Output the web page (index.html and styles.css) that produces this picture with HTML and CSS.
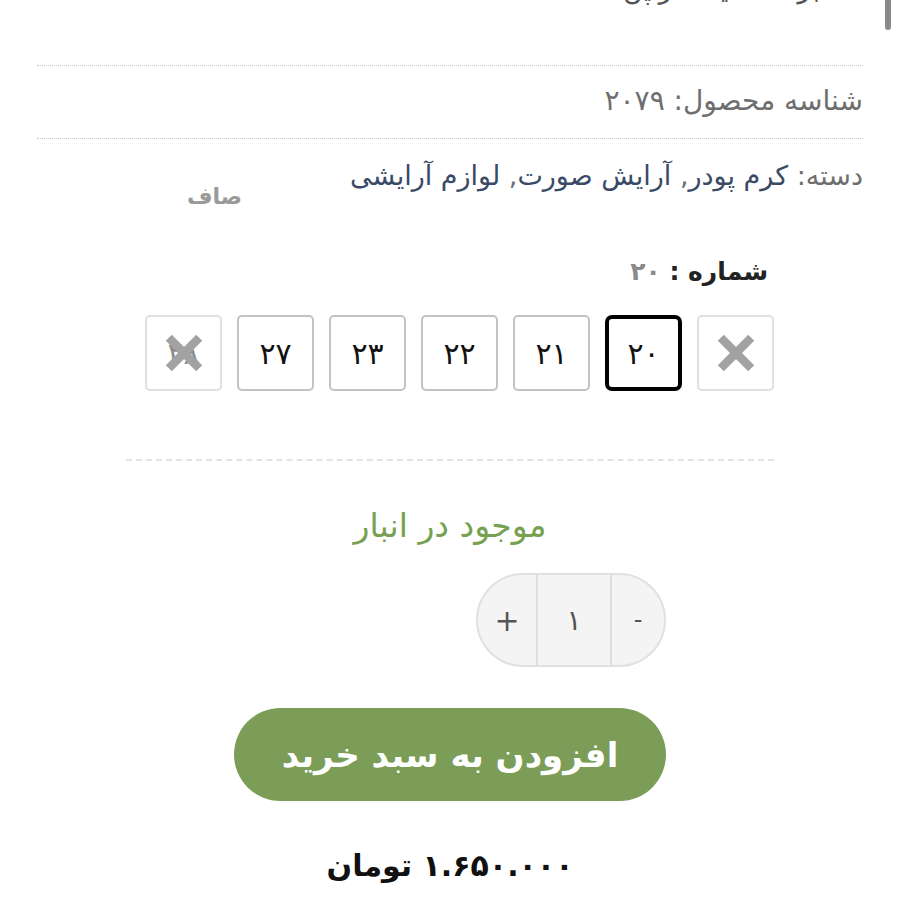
FILE: index.html
```html
<!DOCTYPE html>
<html lang="fa" dir="rtl">
<head>
<meta charset="utf-8">
<title>محصول</title>
<link rel="stylesheet" href="styles.css">
</head>
<body>
<div class="scrollbar"></div>
<div class="page">
  <div class="meta-row cut"><span class="cut-text">برند: کالیستا ژاپن</span></div>
  <div class="meta-row sku">شناسه محصول: ۲۰۷۹</div>
  <div class="cats">دسته: <a href="#">کرم پودر</a>, <a href="#">آرایش صورت</a>, <a href="#">لوازم آرایشی</a></div>
  <div class="floating-tag">صاف</div>

  <div class="variations">
    <div class="var-label">شماره : <span class="var-value">۲۰</span></div>
    <div class="swatches">
      <div class="sw off"><svg class="xmark" viewBox="0 0 40 40"><path d="M4 4L36 36M36 4L4 36"/></svg></div>
      <div class="sw sel">۲۰</div>
      <div class="sw">۲۱</div>
      <div class="sw">۲۲</div>
      <div class="sw">۲۳</div>
      <div class="sw">۲۷</div>
      <div class="sw off"><span class="under">۲۸</span><svg class="xmark over" viewBox="0 0 40 40"><path d="M4 4L36 36M36 4L4 36"/></svg></div>
    </div>
    <div class="divider"></div>
  </div>

  <div class="stock">موجود در انبار</div>

  <div class="cart">
    <div class="qty-row">
      <div class="qty">
        <div class="qbtn minus">-</div>
        <div class="qval">۱</div>
        <div class="qbtn plus">+</div>
      </div>
    </div>
    <button class="add">افزودن به سبد خرید</button>
  </div>

  <div class="price">۱.۶۵۰.۰۰۰ تومان</div>
</div>
</body>
</html>
```

FILE: styles.css
```css
html, body {
  margin: 0;
  padding: 0;
  background: #ffffff;
}
body {
  direction: rtl;
  font-family: "DejaVu Sans", "Noto Sans", sans-serif;
  color: #222;
}
.scrollbar {
  position: absolute;
  top: 0;
  right: 9px;
  width: 6px;
  height: 30px;
  background: #8a8a8a;
  border-radius: 0 0 3px 3px;
  z-index: 2;
}
.page {
  position: relative;
  padding: 0 37px;
}
.meta-row {
  border-bottom: 1px dotted #c6c6c6;
}
.cut {
  display: flow-root;
  height: 65px;
  font-size: 27px;
  color: #555;
}
.cut-text {
  display: block;
  margin-top: -27px;
  padding-right: 43px;
}
.sku {
  height: 73px;
  box-sizing: border-box;
  padding-bottom: 4px;
  display: flex;
  align-items: center;
  font-size: 28px;
  color: #6e6e6e;
}
.cats {
  padding-top: 21px;
  font-size: 27px;
  color: #6e6e6e;
}
.cats a {
  color: #3a4a66;
  text-decoration: none;
}
.floating-tag {
  position: absolute;
  left: 187px;
  top: 184px;
  font-size: 22px;
  font-weight: bold;
  color: #9a9a9a;
}
.variations {
  width: 648px;
  margin: 66px auto 0;
}
.var-label {
  font-weight: bold;
  font-size: 25px;
  color: #222;
  padding-right: 6px;
}
.var-value {
  color: #8a8a8a;
}
.swatches {
  display: flex;
  gap: 15px;
  margin-top: 29px;
}
.sw {
  position: relative;
  width: 77px;
  height: 76px;
  box-sizing: border-box;
  border: 2px solid #c2c2c2;
  border-radius: 5px;
  display: flex;
  align-items: center;
  justify-content: center;
  font-size: 30px;
  color: #111;
}
.sw.sel {
  border: 4px solid #000;
  border-radius: 7px;
}
.sw.off {
  border-color: #e0e0e0;
  color: #8a8a8a;
}
.xmark {
  width: 38px;
  height: 38px;
}
.xmark path {
  stroke: #a2a2a2;
  stroke-width: 9;
  fill: none;
}
.xmark.over {
  position: absolute;
  left: 50%;
  top: 50%;
  margin: -19px 0 0 -19px;
}
.divider {
  border-top: 2px dashed #e2e2e2;
  margin-top: 68px;
}
.stock {
  text-align: center;
  margin-top: 45px;
  font-size: 33px;
  color: #77a152;
}
.cart {
  width: 432px;
  margin: 28px auto 0;
}
.qty-row {
  display: flex;
  justify-content: flex-start;
}
.qty {
  display: flex;
  width: 190px;
  height: 94px;
  box-sizing: border-box;
  border: 2px solid #e0e0e0;
  border-radius: 47px;
  background: #f4f4f4;
  overflow: hidden;
}
.qbtn, .qval {
  display: flex;
  align-items: center;
  justify-content: center;
  color: #555;
}
.minus {
  width: 52px;
  font-size: 24px;
}
.qval {
  width: 72px;
  font-size: 28px;
  border-left: 2px solid #dedede;
  border-right: 2px solid #dedede;
}
.plus {
  flex: 1;
  font-size: 30px;
}
.add {
  display: block;
  width: 432px;
  height: 93px;
  margin-top: 41px;
  border: none;
  border-radius: 47px;
  background: #7b9d57;
  color: #ffffff;
  font-family: "DejaVu Sans", sans-serif;
  font-weight: bold;
  font-size: 34px;
}
.price {
  text-align: center;
  margin-top: 47px;
  font-weight: bold;
  font-size: 30px;
  color: #111;
}
```
